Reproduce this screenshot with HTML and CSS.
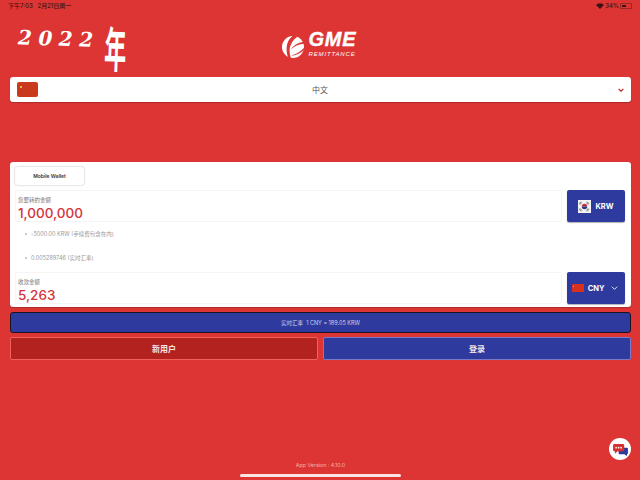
FILE: index.html
```html
<!DOCTYPE html>
<html lang="zh">
<head>
    <meta charset="UTF-8">
    <meta name="viewport" content="width=device-width, initial-scale=1.0">
    <title>GME Remittance</title>
    <link rel="stylesheet" href="styles.css">
</head>
<body>
    <div class="page">

        <!-- Status bar -->
        <div class="status-bar">
            <span>下午7:03&nbsp;&nbsp; 2月21日周一</span>
            <span class="status-right">
                <svg class="wifi" viewBox="0 0 12 9" width="8" height="6"><path d="M6 9 0 3a8.500 8.500 0 0 1 12 0z" fill="#3a1412"/></svg>
                34%
                <span class="battery"><span class="battery-level"></span></span>
            </span>
        </div>

        <!-- Logo -->
        <div class="header">
            <svg class="logo-icon" viewBox="0 0 24 24" width="22" height="22">
                <circle cx="12" cy="12" r="12" fill="#fff"/>
                <path d="M13-1C5 4 3 13 7 25L10 25C6 14 9 6 19-1z" fill="#dc3533"/>
                <path d="M9 16C12 10 17 7 25 6L25 8.500C18 9 13 11 9 16z" fill="#dc3533"/>
                <path d="M10 21C15 20 20 17 25 12L25 14.500C20 19 15 22 10 21z" fill="#dc3533"/>
            </svg>
            <div class="logo-text">
                <div class="logo-name">GME</div>
                <div class="logo-sub">REMITTANCE</div>
            </div>
        </div>

        <!-- Language select -->
        <div class="lang-select">
            <span class="flag flag-cn lang-flag"></span>
            <span class="lang-name">中文</span>
            <svg class="chevron" viewBox="0 0 10 6" width="6" height="4"><path d="M1 1l4 4 4-4" fill="none" stroke="#c0282b" stroke-width="2"/></svg>
        </div>

        <!-- Calculator card -->
        <div class="card">
            <div class="tab">Mobile Wallet</div>

            <div class="amount-row">
                <div class="amount-box">
                    <div class="amount-label">您要转的金额</div>
                    <div class="amount-value">1,000,000</div>
                </div>
                <div class="currency">
                    <svg class="flag-kr" viewBox="0 0 12 12" width="13" height="13">
                        <rect width="12" height="12" fill="#f4f4f6"/>
                        <path d="M3.500 6a2.500 2.500 0 0 1 5 0z" fill="#c8283a"/>
                        <path d="M3.500 6a2.500 2.500 0 0 0 5 0z" fill="#26387f"/>
                        <path d="M1 3.500 2.800 1.500M1.800 4.300 3.600 2.300M8.400 1.500l1.800 2M7.700 2.300l1.800 2M1 8.500l1.800 2M1.800 7.700l1.800 2M8.400 10.500l1.800-2M7.700 9.700l1.800-2" stroke="#2a2a33" stroke-width=".6"/>
                    </svg>
                    <span>KRW</span>
                </div>
            </div>

            <div class="detail-list">
                <div class="detail">-5000.00 KRW (手续费包含在内)</div>
                <div class="detail">0.005289746 (实时汇率)</div>
            </div>

            <div class="amount-row">
                <div class="amount-box">
                    <div class="amount-label">收款金额</div>
                    <div class="amount-value">5,263</div>
                </div>
                <div class="currency">
                    <span class="flag flag-cn currency-flag"></span>
                    <span>CNY</span>
                    <svg class="currency-arrow" viewBox="0 0 10 6" width="7" height="4"><path d="M1 1l4 4 4-4" fill="none" stroke="#fff" stroke-width="1.300"/></svg>
                </div>
            </div>
        </div>

        <div class="rate-bar">实时汇率&nbsp; 1 CNY = 189.05 KRW</div>

        <div class="actions">
            <div class="btn btn-red">新用户</div>
            <div class="btn btn-blue">登录</div>
        </div>

        <div class="version">App Version : 4.10.0</div>
        <div class="home-bar"></div>
    </div>

    <!-- Handwritten note on top of the screenshot -->
    <div class="note">2022<span class="note-year">年</span></div>

    <!-- Chat button -->
    <div class="chat">
        <svg viewBox="0 0 16 14" width="15" height="13">
            <path d="M6 5h9a1 1 0 0 1 1 1v5a1 1 0 0 1-1 1v2l-3-2H7a1 1 0 0 1-1-1z" fill="#2f3a9e"/>
            <path d="M1.500 1h9a1.500 1.500 0 0 1 1.500 1.500v5A1.500 1.500 0 0 1 10.500 9H5l-3 2.500V9h-.5A1.500 1.500 0 0 1 0 7.500v-5A1.500 1.500 0 0 1 1.500 1z" fill="#d8302f"/>
            <circle cx="3.300" cy="5" r=".9" fill="#fff"/><circle cx="6" cy="5" r=".9" fill="#fff"/><circle cx="8.700" cy="5" r=".9" fill="#fff"/>
        </svg>
    </div>
</body>
</html>
```

FILE: styles.css
```css
html, body {
    margin: 0;
    height: 100%;
}

body {
    font-family: "Inter", "Noto Sans CJK SC", sans-serif;
    background-color: #dc3533;
    overflow: hidden;
    color: #444;
}

.page {
    display: flex;
    flex-direction: column;
    height: 480px;
    box-sizing: border-box;
    padding: 0 9px 3px 10px;
}

/* Status bar */
.status-bar {
    display: flex;
    justify-content: space-between;
    align-items: center;
    height: 11px;
    margin-left: -2px;
    font-size: 6px;
    font-weight: 500;
    color: #3a1412;
}

.status-right {
    display: flex;
    align-items: center;
    gap: 1px;
    margin-right: -1px;
}

.battery {
    display: inline-block;
    box-sizing: border-box;
    width: 12px;
    height: 6px;
    padding: 1px;
    border: 1px solid rgba(58, 20, 18, 0.4);
    border-radius: 1px;
}

.battery-level {
    display: block;
    width: 4px;
    height: 100%;
    background-color: #3a1412;
}

/* Logo */
.header {
    display: flex;
    justify-content: center;
    align-items: center;
    gap: 5px;
    height: 66px;
    padding: 1px 3px 0 0;
    box-sizing: border-box;
}

.logo-icon { margin-top: 4px; }

.logo-text {
    color: #fff;
    font-family: "Liberation Sans", sans-serif;
    font-style: italic;
    font-weight: bold;
}

.logo-name {
    margin-bottom: 3px;
    font-size: 20px;
    line-height: 17px;
    letter-spacing: 0.8px;
    -webkit-text-stroke: 0.4px #fff;
}

.logo-sub {
    font-size: 6px;
    line-height: 7px;
    letter-spacing: 0.85px;
    font-weight: normal;
}

/* Flags */
.flag {
    position: relative;
    display: block;
    background-color: #d8321f;
    border-radius: 1px;
}

.flag-cn::before {
    content: "";
    position: absolute;
    left: 3px;
    top: 4px;
    width: 2px;
    height: 2px;
    border-radius: 50%;
    background-color: #f5d77c;
}

/* Language select */
.lang-select {
    display: flex;
    align-items: center;
    height: 25px;
    padding: 0 7px;
    background-color: #fff;
    border-radius: 3px;
    box-shadow: 0 1px 1px rgba(90, 20, 20, 0.35);
}

.lang-flag {
    width: 21px;
    height: 15px;
    background-color: #c9391c;
    border-radius: 2px;
}

.lang-name {
    flex: 1;
    padding-right: 16px;
    text-align: center;
    font-size: 8px;
    color: #555;
}

/* Card */
.card {
    margin-top: 60px;
    height: 145px;
    box-sizing: border-box;
    padding: 5px 6px 3px 5px;
    background-color: #fff;
    border-radius: 3px;
    box-shadow: 0 1px 1px rgba(90, 20, 20, 0.35);
}

.tab {
    display: flex;
    justify-content: center;
    align-items: center;
    width: 69px;
    height: 18px;
    font-size: 5px;
    font-weight: 600;
    color: #333;
    border-radius: 3px;
    box-shadow: 0 0 2px rgba(0, 0, 0, 0.35);
}

.amount-row {
    display: flex;
    gap: 5px;
    height: 32px;
}

.tab + .amount-row { margin-top: 5px; }

.amount-box {
    flex: 1;
    box-sizing: border-box;
    padding: 6px 2px 0;
    border: 1px solid #f5f5f5;
    border-radius: 2px;
}

.amount-label {
    font-size: 5.5px;
    line-height: 7px;
    color: #777;
}

.amount-value {
    margin-top: 1px;
    font-size: 13.5px;
    font-weight: 500;
    line-height: 16px;
    color: #d3343d;
}

.currency {
    display: flex;
    justify-content: center;
    align-items: center;
    gap: 4px;
    width: 58px;
    font-size: 7.5px;
    font-weight: 700;
    color: #fff;
    background-color: #2f3a9e;
    border-radius: 2px;
    box-shadow: 0 1px 1px rgba(0, 0, 0, 0.3);
}

.currency-flag {
    width: 12px;
    height: 8px;
    margin-left: -2px;
}

.currency-flag::before {
    left: 1px;
    top: 2px;
    width: 1px;
    height: 1px;
}

.currency-arrow { margin-left: 3px; }

.detail-list {
    display: flex;
    flex-direction: column;
    gap: 18px;
    height: 50px;
    box-sizing: border-box;
    padding: 9px 0 0 10px;
}

.detail {
    position: relative;
    font-size: 5.5px;
    line-height: 6px;
    color: #999;
    padding-left: 6px;
}

.detail::before {
    content: "";
    position: absolute;
    left: 0;
    top: 2px;
    width: 2px;
    height: 2px;
    border-radius: 50%;
    background-color: #bbb;
}

/* Rate bar and buttons */
.rate-bar {
    display: flex;
    justify-content: center;
    align-items: center;
    height: 21px;
    margin-top: 5px;
    box-sizing: border-box;
    font-size: 5.5px;
    color: #cfd3ee;
    background-color: #2f3a9e;
    border: 1px solid #1a1420;
    border-radius: 3px;
}

.actions {
    display: flex;
    gap: 5px;
    margin-top: 4px;
}

.btn {
    flex: 1;
    display: flex;
    justify-content: center;
    align-items: center;
    height: 23px;
    box-sizing: border-box;
    font-size: 8px;
    font-weight: 700;
    color: #f5e6e6;
    border-radius: 2px;
}

.btn-red {
    background-color: #b3221e;
    border: 1px solid #f0615c;
}

.btn-blue {
    background-color: #2f3a9e;
    border: 1px solid #7a7ac8;
}

/* Footer */
.version {
    margin-top: auto;
    text-align: center;
    font-size: 5.3px;
    line-height: 8px;
    color: #f4b3b0;
}

.home-bar {
    align-self: center;
    width: 161px;
    height: 3px;
    margin: 5px 0 0 -1px;
    border-radius: 2px;
    background-color: #fbe4e4;
}

/* Overlays */
.note {
    position: absolute;
    left: 18px;
    top: 21px;
    font-family: "DejaVu Serif", "Noto Sans CJK SC", serif;
    font-size: 20px;
    line-height: 30px;
    letter-spacing: 6.500px;
    font-style: italic;
    font-weight: bold;
    color: #fff;
    transform: rotate(2deg);
}

.note-year {
    display: inline-block;
    font-family: "Noto Sans CJK SC", sans-serif;
    font-style: normal;
    font-size: 22px;
    letter-spacing: 0;
    transform: translate(5px, -10px) scaleY(2.200);
    transform-origin: top;
}

.chat {
    position: absolute;
    left: 609px;
    top: 438px;
    display: flex;
    justify-content: center;
    align-items: center;
    width: 22px;
    height: 22px;
    border-radius: 50%;
    background-color: #fff;
}
```
